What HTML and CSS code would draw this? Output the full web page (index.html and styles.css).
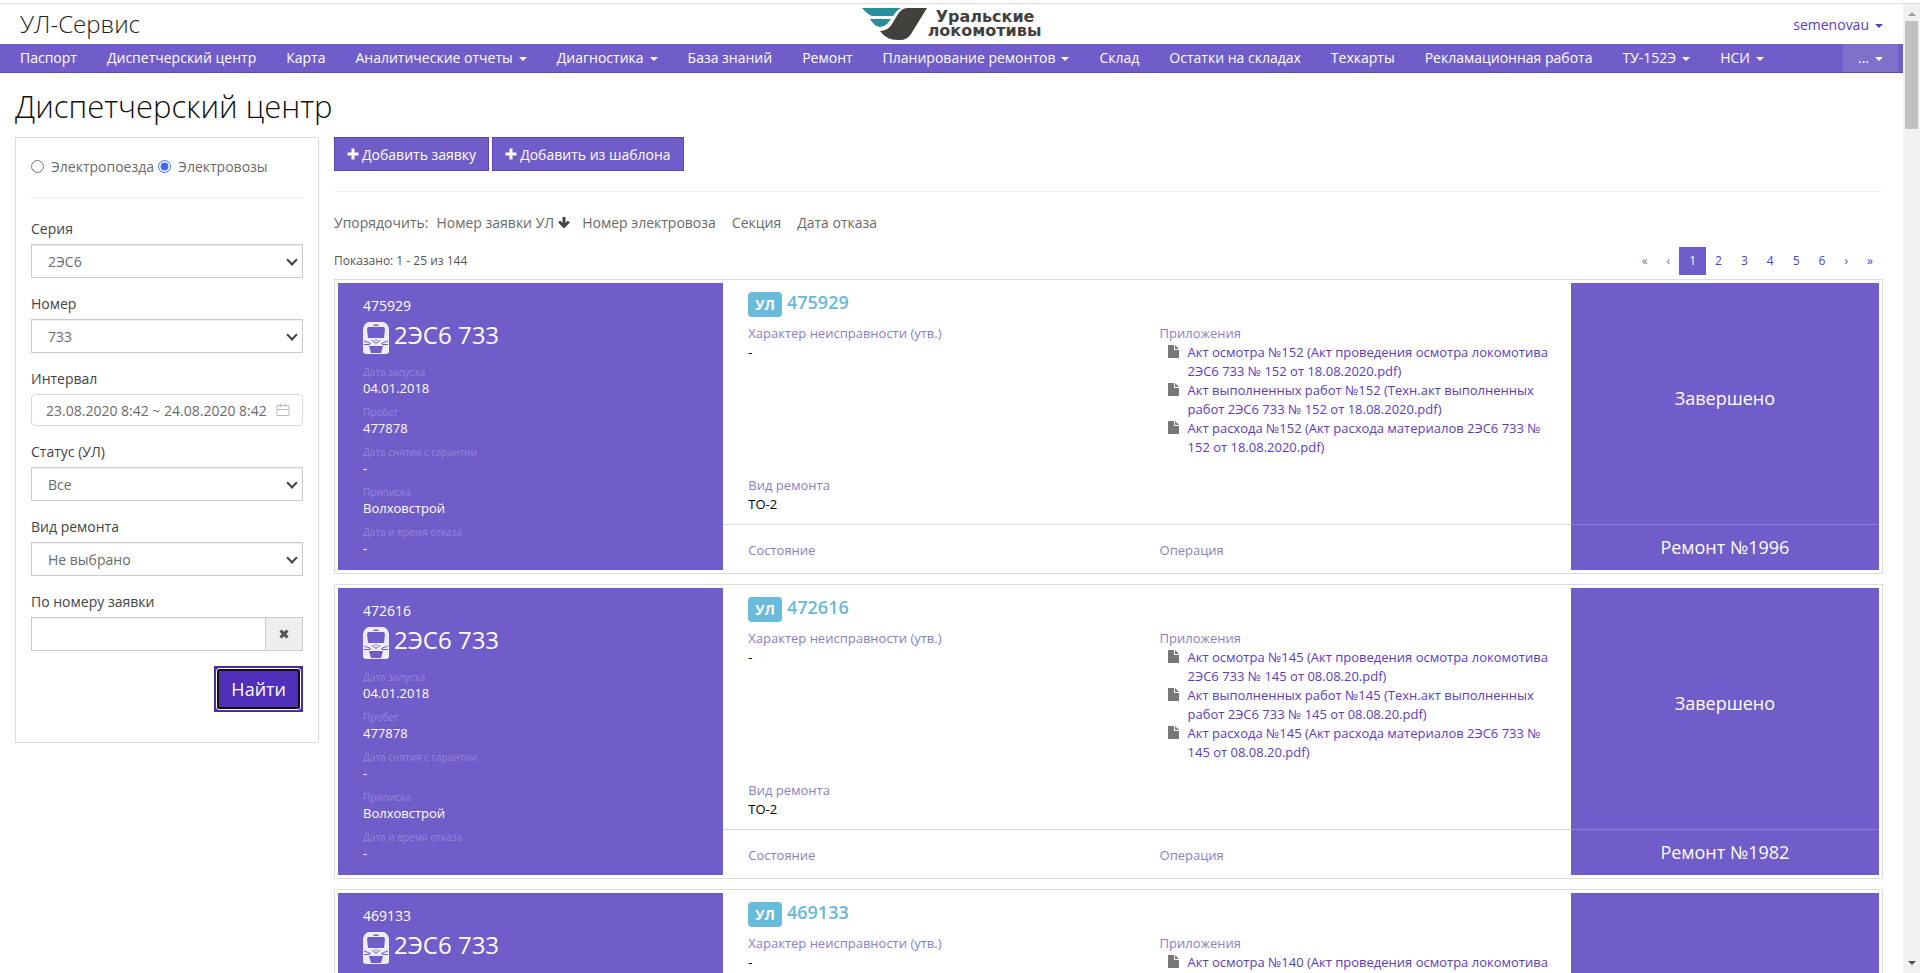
FILE: index.html
```html
<!DOCTYPE html>
<html lang="ru">
<head>
<meta charset="utf-8">
<title>Диспетчерский центр</title>
<link rel="stylesheet" href="styles.css">
</head>
<body>
<svg class="sprite" aria-hidden="true">
  <symbol id="plus" viewBox="0 0 12 12"><path fill="currentColor" d="M4.5 0.5h3v4h4v3h-4v4h-3v-4h-4v-3h4z"/></symbol>
  <symbol id="arrow-down" viewBox="0 0 12 12"><path fill="currentColor" d="M4.5 0h3v6l2.400-2.400 1.900 1.900L6 11.6 0.2 5.500l1.900-1.900 2.400 2.400z"/></symbol>
  <symbol id="cross" viewBox="0 0 10 10"><path fill="currentColor" d="M2.6 0.4 5 2.8 7.4 0.4 9.6 2.6 7.2 5 9.6 7.4 7.4 9.6 5 7.2 2.6 9.6 0.4 7.4 2.8 5 0.4 2.6z"/></symbol>
  <symbol id="file" viewBox="0 0 11 13"><path fill="currentColor" d="M0 0h6v5h5v8H0zM7 0l4 4H7z"/></symbol>
  <symbol id="calendar" viewBox="0 0 14 14"><path fill="none" stroke="currentColor" d="M1 2.5h12v10H1zM1 6.5h12M4.500 0.500v3.500M9.500 0.500v3.500"/></symbol>
  <symbol id="train" viewBox="0 0 26 32">
    <path fill="#efedf4" d="M6 0h14c3 0 6 4 6 8v21c0 2-1 3-3 3H3c-2 0-3-1-3-3V8c0-4 3-8 6-8z"/>
    <path fill="#705dc9" d="M5 5h16l1 2-1 9H5L4 7zM10.500 2.500h5v1.500h-5zM6 24h14l-2 7H8z"/>
    <path fill="none" stroke="#705dc9" d="M1 19l7 2.500M25 19l-7 2.500M1 22.500h6M25 22.500h-6M9 18l4 3.500 4-3.500M12 18h2"/>
  </symbol>
</svg>
<div class="page">
  <header class="topbar">
    <a class="brand" href="#">УЛ-Сервис</a>
    <a class="logo" href="#">
      <svg class="logo-mark" viewBox="0 0 66 33" aria-hidden="true">
        <path fill="#268f9b" d="M0 0h39q-4 2-8 8H10Q5 6 0 0zM8 11h21l-4 5q-3 3-7 3-6-1-10-8z"/>
        <path fill="#43413e" d="M45 0h20L49 26q-4 6-11 6-13 1-20-9 8 0 12-7l6-10q4-6 9-6z"/>
      </svg>
      <span class="logo-text"><span>Уральские</span><span>локомотивы</span></span>
    </a>
    <a class="user caret" href="#">semenovau</a>
  </header>
  <nav class="nav">
    <a href="#">Паспорт</a>
    <a href="#">Диспетчерский центр</a>
    <a href="#">Карта</a>
    <a class="caret" href="#">Аналитические отчеты</a>
    <a class="caret" href="#">Диагностика</a>
    <a href="#">База знаний</a>
    <a href="#">Ремонт</a>
    <a class="caret" href="#">Планирование ремонтов</a>
    <a href="#">Склад</a>
    <a href="#">Остатки на складах</a>
    <a href="#">Техкарты</a>
    <a href="#">Рекламационная работа</a>
    <a class="caret" href="#">ТУ-152Э</a>
    <a class="caret" href="#">НСИ</a>
    <a class="caret more" href="#">...</a>
  </nav>
  <h1>Диспетчерский центр</h1>
  <div class="layout">
    <form class="filter">
      <div class="radios">
        <label><input type="radio" name="kind">Электропоезда</label>
        <label><input type="radio" name="kind" checked>Электровозы</label>
      </div>
      <hr>
      <div class="field"><label for="series">Серия</label><div class="select"><select id="series"><option>2ЭС6</option></select></div></div>
      <div class="field"><label for="number">Номер</label><div class="select"><select id="number"><option>733</option></select></div></div>
      <div class="field"><label for="interval">Интервал</label>
        <div class="date"><input id="interval" type="text" value="23.08.2020 8:42 ~ 24.08.2020 8:42"><svg><use href="#calendar"/></svg></div>
      </div>
      <div class="field"><label for="status">Статус (УЛ)</label><div class="select"><select id="status"><option>Все</option></select></div></div>
      <div class="field"><label for="repair">Вид ремонта</label><div class="select"><select id="repair"><option>Не выбрано</option></select></div></div>
      <div class="field"><label for="request">По номеру заявки</label>
        <div class="group"><input id="request" type="text"><button type="button" aria-label="Очистить"><svg><use href="#cross"/></svg></button></div>
      </div>
      <button class="find" type="button">Найти</button>
    </form>
    <main class="content">
      <div class="actions">
        <button type="button"><svg><use href="#plus"/></svg>Добавить заявку</button>
        <button type="button"><svg><use href="#plus"/></svg>Добавить из шаблона</button>
      </div>
      <hr>
      <div class="sort">
        <span>Упорядочить:</span>
        <a href="#">Номер заявки УЛ<svg><use href="#arrow-down"/></svg></a>
        <a href="#">Номер электровоза</a>
        <a href="#">Секция</a>
        <a href="#">Дата отказа</a>
      </div>
      <div class="summary">
        <span>Показано: 1 - 25 из 144</span>
        <nav class="pages" aria-label="Страницы">
          <span>«</span><span>‹</span><a class="active" href="#">1</a><a href="#">2</a><a href="#">3</a><a href="#">4</a><a href="#">5</a><a href="#">6</a><a href="#">›</a><a href="#">»</a>
        </nav>
      </div>

      <article class="card">
        <section class="loco">
          <div class="loco-id">475929</div>
          <h2><svg><use href="#train"/></svg>2ЭС6 733</h2>
          <dl>
            <dt>Дата запуска</dt><dd>04.01.2018</dd>
            <dt>Пробег</dt><dd>477878</dd>
            <dt>Дата снятия с гарантии</dt><dd>-</dd>
            <dt>Приписка</dt><dd>Волховстрой</dd>
            <dt>Дата и время отказа</dt><dd>-</dd>
          </dl>
        </section>
        <section class="info">
          <div class="number"><span class="badge">УЛ</span><a href="#">475929</a></div>
          <div class="details">
            <div class="fault">
              <div><div class="caption">Характер неисправности (утв.)</div><div>-</div></div>
              <div><div class="caption">Вид ремонта</div><div>ТО-2</div></div>
            </div>
            <div class="files">
              <div class="caption">Приложения</div>
              <ul>
                <li><svg><use href="#file"/></svg><a href="#">Акт осмотра №152 (Акт проведения осмотра локомотива 2ЭС6 733 № 152 от 18.08.2020.pdf)</a></li>
                <li><svg><use href="#file"/></svg><a href="#">Акт выполненных работ №152 (Техн.акт выполненных работ 2ЭС6 733 № 152 от 18.08.2020.pdf)</a></li>
                <li><svg><use href="#file"/></svg><a href="#">Акт расхода №152 (Акт расхода материалов 2ЭС6 733 № 152 от 18.08.2020.pdf)</a></li>
              </ul>
            </div>
          </div>
        </section>
        <div class="state">Завершено</div>
        <div class="stage"><span>Состояние</span><span>Операция</span></div>
        <div class="repair">Ремонт №1996</div>
      </article>

      <article class="card">
        <section class="loco">
          <div class="loco-id">472616</div>
          <h2><svg><use href="#train"/></svg>2ЭС6 733</h2>
          <dl>
            <dt>Дата запуска</dt><dd>04.01.2018</dd>
            <dt>Пробег</dt><dd>477878</dd>
            <dt>Дата снятия с гарантии</dt><dd>-</dd>
            <dt>Приписка</dt><dd>Волховстрой</dd>
            <dt>Дата и время отказа</dt><dd>-</dd>
          </dl>
        </section>
        <section class="info">
          <div class="number"><span class="badge">УЛ</span><a href="#">472616</a></div>
          <div class="details">
            <div class="fault">
              <div><div class="caption">Характер неисправности (утв.)</div><div>-</div></div>
              <div><div class="caption">Вид ремонта</div><div>ТО-2</div></div>
            </div>
            <div class="files">
              <div class="caption">Приложения</div>
              <ul>
                <li><svg><use href="#file"/></svg><a href="#">Акт осмотра №145 (Акт проведения осмотра локомотива 2ЭС6 733 № 145 от 08.08.20.pdf)</a></li>
                <li><svg><use href="#file"/></svg><a href="#">Акт выполненных работ №145 (Техн.акт выполненных работ 2ЭС6 733 № 145 от 08.08.20.pdf)</a></li>
                <li><svg><use href="#file"/></svg><a href="#">Акт расхода №145 (Акт расхода материалов 2ЭС6 733 № 145 от 08.08.20.pdf)</a></li>
              </ul>
            </div>
          </div>
        </section>
        <div class="state">Завершено</div>
        <div class="stage"><span>Состояние</span><span>Операция</span></div>
        <div class="repair">Ремонт №1982</div>
      </article>

      <article class="card">
        <section class="loco">
          <div class="loco-id">469133</div>
          <h2><svg><use href="#train"/></svg>2ЭС6 733</h2>
        </section>
        <section class="info">
          <div class="number"><span class="badge">УЛ</span><a href="#">469133</a></div>
          <div class="details">
            <div class="fault">
              <div><div class="caption">Характер неисправности (утв.)</div><div>-</div></div>
            </div>
            <div class="files">
              <div class="caption">Приложения</div>
              <ul>
                <li><svg><use href="#file"/></svg><a href="#">Акт осмотра №140 (Акт проведения осмотра локомотива</a></li>
              </ul>
            </div>
          </div>
        </section>
        <div class="state"></div>
        <div class="stage"></div>
        <div class="repair"></div>
      </article>
    </main>
  </div>
</div>
<div class="scrollbar" aria-hidden="true"><i class="up"></i><i class="thumb"></i><i class="down"></i></div>
</body>
</html>
```
FILE: styles.css
```css
* { box-sizing: border-box; }
body {
  margin: 0;
  display: flex;
  height: 100vh;
  overflow: hidden;
  border-top: 3px solid #fff;
  font: 400 14px/21px "Open Sans", "Noto Sans", sans-serif;
  color: #6a6a6a;
  background: #fff;
}
a { color: #5b3cc0; text-decoration: none; }
button, input, select { font: inherit; color: inherit; margin: 0; }
svg { display: block; flex: none; }
.sprite { position: absolute; width: 0; height: 0; }
.page { flex: 1; min-width: 0; border-top: 1px solid #ddd; }

.caret::after {
  content: "";
  display: inline-block;
  margin-left: 6px;
  vertical-align: middle;
  border: 4px solid transparent;
  border-top-color: currentColor;
  border-bottom: 0;
}

.topbar {
  display: grid;
  grid-template-columns: 1fr auto 1fr;
  align-items: center;
  height: 40px;
  padding: 0 20px;
}
.brand { font-size: 24px; line-height: 40px; font-weight: 300; color: #222; }
.user { justify-self: end; }
.logo { display: flex; align-items: center; color: #43413e; }
.logo-mark { width: 66px; height: 33px; }
.logo-text { display: grid; font: 700 16px/14px "DejaVu Sans", sans-serif; }
.logo-text span:first-child { padding-left: 8px; }

.nav {
  display: flex;
  padding: 0 5px;
  background: #705dc9;
  border-bottom: 1px solid #5e45c0;
}
.nav a { padding: 4px 15px; line-height: 20px; color: #fff; white-space: nowrap; }
.nav .more { margin-left: auto; background: #8070cc; }

h1 { margin: 16px 15px 14px; font-size: 31px; line-height: 34px; font-weight: 300; color: #111; }
hr { margin: 20px 0; border: 0; border-top: 1px solid #eee; }

.layout { display: flex; align-items: flex-start; gap: 15px; padding: 0 20px 0 15px; }

.filter {
  flex: none;
  width: 304px;
  padding: 15px 15px 30px;
  border: 1px solid #ddd;
  display: flow-root;
}
.radios { display: flex; gap: 4px; padding: 3px 0 0; }
.radios label { display: flex; align-items: center; gap: 7px; }
.radios input { width: 13px; height: 13px; accent-color: #4169ff; }
.field { margin-bottom: 15px; }
.field > label { display: block; margin-bottom: 5px; color: #444; }
.select { position: relative; }
.select::after {
  content: "";
  position: absolute;
  top: 12px;
  right: 7px;
  width: 6px;
  height: 6px;
  border: solid #444;
  border-width: 0 2px 2px 0;
  transform: rotate(45deg);
}
.select select {
  display: block;
  width: 100%;
  height: 34px;
  padding: 0 16px;
  appearance: none;
  border: 1px solid #ccc;
  border-radius: 0;
  background: #fff;
  box-shadow: inset 0 1px 1px #eee;
}
.date {
  display: flex;
  align-items: center;
  height: 32px;
  padding: 0 12px 0 14px;
  border: 1px solid #d9d9d9;
  border-radius: 4px;
}
.date input { flex: 1; min-width: 0; padding: 0; border: 0; outline: 0; background: none; }
.date svg { width: 14px; height: 14px; color: #bbb; }
.group { display: flex; height: 34px; }
.group input { flex: 1; min-width: 0; border: 1px solid #ccc; box-shadow: inset 0 1px 1px #eee; }
.group button { width: 37px; padding: 0 13px; border: 1px solid #ccc; border-left: 0; background: #eee; color: #555; }
.group svg { width: 10px; height: 10px; }
.find {
  position: relative;
  float: right;
  height: 46px;
  padding: 0 16px;
  border: 1px solid #422a9e;
  background: #502fbb;
  color: #fff;
  font-size: 18px;
}
.find::after {
  content: "";
  position: absolute;
  inset: 2px;
  border: 2px solid #101010;
  border-radius: 3px;
  box-shadow: 0 0 0 1px #fff;
}

.content { flex: 1; min-width: 0; }
.actions { display: flex; gap: 3px; }
.actions button {
  display: flex;
  align-items: center;
  gap: 3px;
  height: 34px;
  padding: 0 12px;
  border: 1px solid #5e45c0;
  background: #705dc9;
  color: #fff;
}
.actions svg { width: 12px; height: 12px; }
.sort { display: flex; gap: 16px; }
.sort span { margin-right: -8px; }
.sort a { display: flex; align-items: center; gap: 4px; color: inherit; }
.sort svg { width: 12px; height: 12px; margin-right: -4px; color: #444; }
.summary { display: flex; justify-content: space-between; align-items: center; margin: 14px 0 4px; font-size: 12px; line-height: 18px; color: #555; }
.pages { display: flex; }
.pages > * { margin-left: -1px; padding: 5px 10px; color: #4a3cf5; }
.pages span { color: #777; }
.pages .active { background: #705dc9; color: #fff; }

.card {
  display: grid;
  grid-template-columns: 25fr 55fr 20fr;
  grid-template-rows: 1fr 46px;
  min-height: 295px;
  margin-bottom: 10px;
  padding: 3px;
  border: 1px solid #ddd;
  font-size: 13px;
  line-height: 19px;
  color: #000;
}
.loco { grid-row: 1 / 3; padding: 12px 25px 4px; background: #705dc9; color: #fff; }
.loco-id { font-size: 14px; line-height: 21px; }
.loco h2 { display: flex; align-items: flex-start; gap: 5px; margin: 6px 0 11px; font-size: 24px; line-height: 26px; font-weight: 400; }
.loco h2 svg { width: 26px; height: 32px; }
dl { margin: 0; }
dt { font-size: 10px; line-height: 14px; color: #9385da; }
dd { margin: 0 0 7px; }
.info { display: flex; flex-direction: column; padding: 9px 0 10px 25px; }
.number { display: flex; align-items: flex-start; gap: 5px; margin-bottom: 7px; font-size: 18px; line-height: 20px; font-weight: 600; }
.number a { color: #67b8dc; }
.badge { padding: 2px 7px; border-radius: 4px; background: #69bbdc; color: #fff; font-size: 14px; line-height: 21px; font-weight: 700; }
.details { flex: 1; display: grid; grid-template-columns: 1fr 1fr; }
.fault { display: flex; flex-direction: column; justify-content: space-between; }
.caption, .stage { color: #8a7fc6; }
.files { padding-right: 20px; }
.files ul { margin: 0; padding: 0 0 0 8px; list-style: none; }
.files li { display: flex; gap: 9px; }
.files li svg { width: 11px; height: 13px; margin-top: 2px; color: #777; }
.state, .repair { display: flex; align-items: center; justify-content: center; background: #705dc9; color: #fff; font-size: 18px; line-height: 27px; }
.state { padding-bottom: 10px; }
.repair { border-top: 1px solid #8d7dd8; }
.stage { display: grid; grid-template-columns: 1fr 1fr; align-items: center; padding: 6px 0 0 25px; border-top: 1px solid #ddd; }

.scrollbar { flex: none; display: flex; flex-direction: column; width: 17px; padding: 8px 2px; background: #f1f1f1; border-top: 1px solid #ddd; }
.scrollbar i { display: block; }
.up, .down { align-self: center; border: 4px solid transparent; }
.up { border-top: 0; border-bottom-color: #a3a3a3; }
.thumb { height: 108px; margin-top: 5px; background: #c1c1c1; }
.down { margin-top: auto; border-bottom: 0; border-top-color: #505050; }
```
